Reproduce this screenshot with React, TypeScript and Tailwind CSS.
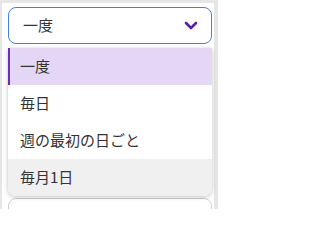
import React from 'react';

const options = ['一度', '毎日', '週の最初の日ごと', '毎月1日'];

const ChevronDown: React.FC<React.SVGProps<SVGSVGElement>> = (props) => (
  <svg viewBox="0 0 14 9" fill="none" stroke="currentColor" strokeWidth={2.6} strokeLinecap="round" strokeLinejoin="round" {...props}>
    <path d="M2 2l5 5 5-5" />
  </svg>
);

export default function App() {
  const selected = 0;
  const hovered = 3;

  return (
    <div
      className="w-[218px] h-[209px] overflow-hidden bg-[#e6e6e6] pt-[3px] pl-[2px] pr-[4px] text-[#333333]"
      style={{ fontFamily: '"Noto Sans CJK JP", "Noto Sans", sans-serif' }}
    >
      <div className="relative h-[220px] bg-white pl-[6px] pt-[4px]">
        {/* select trigger */}
        <button className="flex h-[37px] w-[204px] items-center justify-between rounded-[8px] border border-[#3f80e4] bg-white pl-[14px] pr-[13px] text-[15px]">
          <span>一度</span>
          <ChevronDown className="h-[9px] w-[14px] text-[#5b1ea8]" />
        </button>

        {/* next field, under the open menu */}
        <div className="mt-[154px] h-[40px] w-[204px] rounded-[8px] border border-[#cfcfcf] bg-white" />

        {/* open menu */}
        <ul className="absolute left-[6px] top-[45px] w-[204px] overflow-hidden rounded-b-[8px] bg-white shadow-[0_1px_4px_rgba(0,0,0,0.25)]">
          {options.map((opt, i) => (
            <li
              key={opt}
              className={`flex h-[37px] items-center text-[15px] ${
                i === selected
                  ? 'border-l-2 border-[#6a2db8] bg-[#e4d7f5] pl-[10px]'
                  : i === hovered
                  ? 'bg-[#f0f0f0] pl-[12px]'
                  : 'pl-[12px]'
              }`}
            >
              {opt}
            </li>
          ))}
        </ul>
      </div>
    </div>
  );
}
